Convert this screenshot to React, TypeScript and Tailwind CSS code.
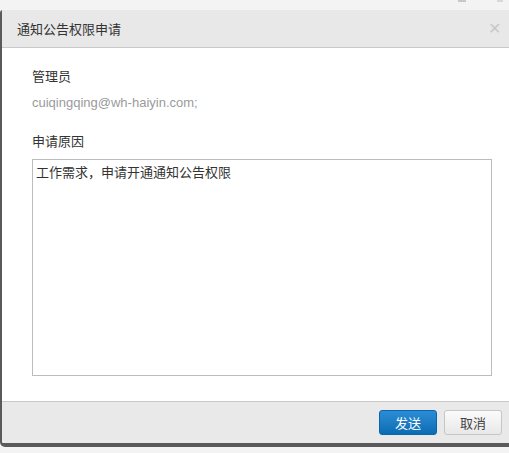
const cjk = "font-['Microsoft_YaHei','Noto_Sans_CJK_SC',sans-serif]";

export default function App() {
  return (
    <div className={`h-[453px] w-[509px] overflow-hidden bg-[#f3f3f3] ${cjk} text-[13px] text-[#333]`}>
      {/* strip of the page behind the dialog */}
      <div className="relative h-[10px]">
        <span className="absolute left-[458px] top-0 h-[2px] w-[8px] bg-[#c8c8c8]" />
        <span className="absolute left-[497px] top-0 h-[2px] w-[6px] bg-[#d8d8d8]" />
      </div>

      <div className="w-[509px] rounded-tl-[3px] rounded-bl-[5px] border-b-4 border-l-2 border-[#5a5a5a] bg-white">
        <div className="flex h-[38px] items-center justify-between border-b border-[#c9c9c9] bg-[#e8e8e8] pl-[15px] pr-[8px]">
          <span className="leading-[18px] text-[#333]">通知公告权限申请</span>
          <span className="font-['DejaVu_Sans',sans-serif] text-[16px] font-light leading-none text-[#c8c8c8]">✕</span>
        </div>

        <div className="flex flex-col px-[30px] pb-[25px] pt-[19px]">
          <div className="leading-[18px]">管理员</div>
          <div className="mt-[9px] font-['Liberation_Sans',sans-serif] leading-[18px] text-[#9a9a9a]">
            cuiqingqing@wh-haiyin.com;
          </div>
          <div className="mt-[20px] leading-[18px]">申请原因</div>
          <textarea
            className={`mt-[9px] h-[217px] w-[460px] resize-none border border-[#bcbcbc] px-[3px] pt-[3px] leading-[18px] text-[#333] outline-none ${cjk} text-[13px]`}
            defaultValue="工作需求，申请开通通知公告权限"
          />
        </div>

        <div className="flex h-[42px] items-start justify-end gap-[7px] rounded-bl-[3px] border-t border-[#c9c9c9] bg-[#e9e9e9] pr-[7px] pt-[8px]">
          <button className="h-[25px] w-[58px] rounded-[3px] border border-[#0b65aa] bg-gradient-to-b from-[#2b8dd6] to-[#0a6db4] text-[13px] leading-none text-white">
            发送
          </button>
          <button className="h-[25px] w-[58px] rounded-[3px] border border-[#c6c6c6] bg-gradient-to-b from-[#fbfbfb] to-[#e8e8e8] text-[13px] leading-none text-[#444]">
            取消
          </button>
        </div>
      </div>
    </div>
  );
}
